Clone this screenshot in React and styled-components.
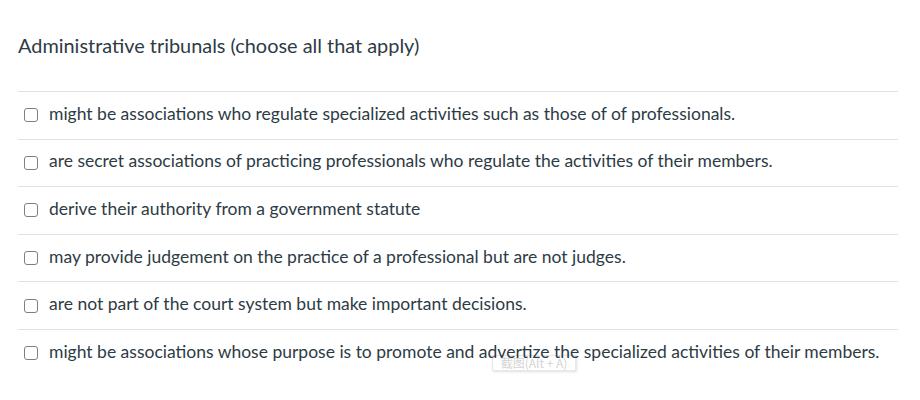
import React from "react";
import styled, { createGlobalStyle } from "styled-components";

const Global = createGlobalStyle`
  body { margin: 0; background: #fff; font-family: Lato, "Noto Sans", sans-serif; color: #2d3b45; }
`;

const Page = styled.div`
  width: 920px;
  height: 400px;
  box-sizing: border-box;
  padding: 0 22px 0 18px;
  position: relative;
`;

const Title = styled.div`
  font-size: 19.9px;
  line-height: 26px;
  padding: 32px 0 33px;
  color: #2d3b45;
`;

const Answers = styled.div`
  display: flex;
  flex-direction: column;
  position: relative;
  z-index: 1;
`;

const Row = styled.label`
  display: flex;
  align-items: center;
  gap: 11px;
  height: 46.6px;
  border-top: 1px solid #dfe1e3;
  padding-left: 6px;
  font-size: 17.5px;
  color: #2d3b45;
`;

const Box = styled.span`
  width: 12px;
  height: 12px;
  border: 1.5px solid #7f7f7f;
  border-radius: 3px;
  flex: none;
`;

const Label = styled.span`
  position: relative;
  top: -2px;
`;

const Tip = styled.div`
  position: absolute;
  z-index: 0;
  left: 492px;
  top: 355px;
  width: 82px;
  height: 14px;
  background: rgba(255, 255, 255, 0.7);
  border: 1px solid #e8e8e8;
  box-shadow: 1px 1px 2px rgba(0, 0, 0, 0.12);
  font-size: 12px;
  line-height: 14px;
  color: #d4d4d4;
  text-align: center;
  font-family: "Noto Sans CJK SC", sans-serif;
`;

const answers = [
  "might be associations who regulate specialized activities such as those of of professionals.",
  "are secret associations of practicing professionals who regulate the activities of their members.",
  "derive their authority from a government statute",
  "may provide judgement on the practice of a professional but are not judges.",
  "are not part of the court system but make important decisions.",
  "might be associations whose purpose is to promote and advertize the specialized activities of their members.",
];

export default function App() {
  return (
    <Page>
      <Global />
      <Tip>截图(Alt + A)</Tip>
      <Title>Administrative tribunals (choose all that apply)</Title>
      <Answers>
        {answers.map((a) => (
          <Row key={a}>
            <Box />
            <Label>{a}</Label>
          </Row>
        ))}
      </Answers>
    </Page>
  );
}
